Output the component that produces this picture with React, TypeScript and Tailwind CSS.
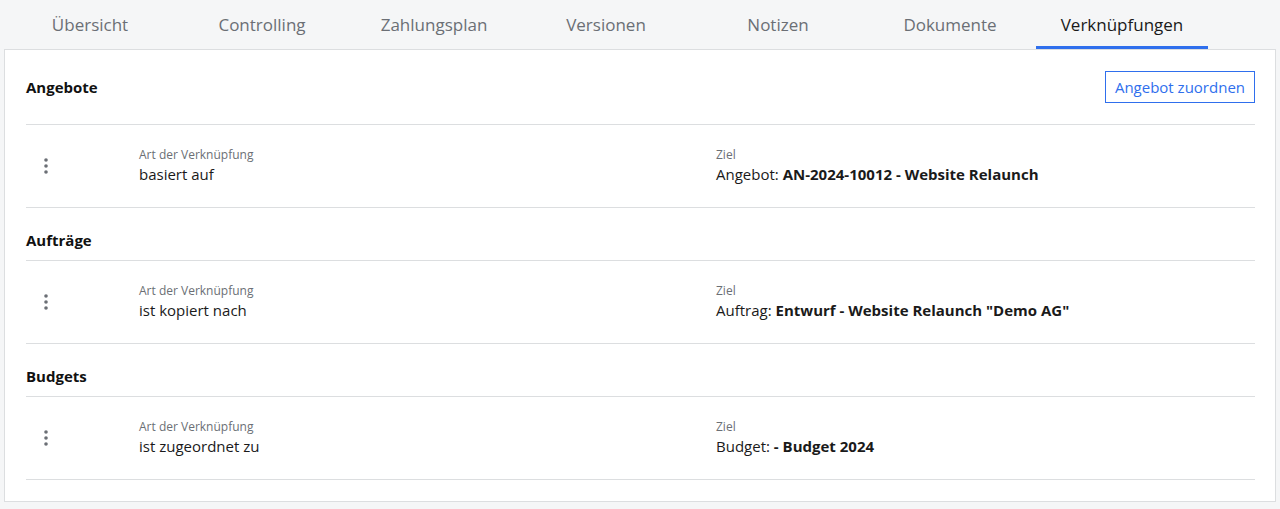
import React from "react";

const tabs = ["Übersicht","Controlling","Zahlungsplan","Versionen","Notizen","Dokumente","Verknüpfungen"];

function Dots() {
  return (
    <svg width="4" height="16" viewBox="0 0 4 16" className="text-gray-500">
      <circle cx="2" cy="2" r="1.8" fill="#6b6f75" />
      <circle cx="2" cy="8" r="1.8" fill="#6b6f75" />
      <circle cx="2" cy="14" r="1.8" fill="#6b6f75" />
    </svg>
  );
}

function Row({ art, prefix, target }: { art: string; prefix: string; target: string }) {
  return (
    <div className="flex items-center h-[83px] border-b border-[#dcdee0]">
      <div className="w-[113px] pl-[18px] flex items-center"><Dots /></div>
      <div className="w-[577px] flex flex-col">
        <span className="text-[12px] leading-[16px] text-[#6b6f75]">Art der Verknüpfung</span>
        <span className="text-[15px] leading-[22px] text-[#1a1a1a]">{art}</span>
      </div>
      <div className="flex flex-col">
        <span className="text-[12px] leading-[16px] text-[#6b6f75]">Ziel</span>
        <span className="text-[15px] leading-[22px] text-[#1a1a1a]">{prefix} <b>{target}</b></span>
      </div>
    </div>
  );
}

export default function App() {
  return (
    <div className="w-[1280px] h-[509px] bg-[#f5f6f7] px-[4px]" style={{ fontFamily: '"Open Sans", sans-serif' }}>
      <div className="flex h-[49px]">
        {tabs.map((t, i) => (
          <div key={t} className={`w-[172px] flex items-center justify-center text-[17px] ${i === 6 ? "text-[#1a1a1a] border-b-[3px] border-[#2f6fed] pt-[3px]" : "text-[#6b6f75]"}`}>
            {t}
          </div>
        ))}
      </div>
      <div className="bg-white border border-[#dcdee0] h-[453px] pl-[21px] pr-[20px]">
        <div className="flex items-center justify-between h-[75px] border-b border-[#dcdee0]">
          <span className="text-[15px] font-bold text-[#111]">Angebote</span>
          <button className="h-[32px] px-[9px] border border-[#2f6fed] text-[#2f6fed] text-[15px]">Angebot zuordnen</button>
        </div>
        <Row art="basiert auf" prefix="Angebot:" target="AN-2024-10012 - Website Relaunch" />
        <div className="flex items-center h-[53px] border-b border-[#dcdee0] pt-[12px]">
          <span className="text-[15px] font-bold text-[#111]">Aufträge</span>
        </div>
        <Row art="ist kopiert nach" prefix="Auftrag:" target={'Entwurf - Website Relaunch "Demo AG"'} />
        <div className="flex items-center h-[53px] border-b border-[#dcdee0] pt-[12px]">
          <span className="text-[15px] font-bold text-[#111]">Budgets</span>
        </div>
        <Row art="ist zugeordnet zu" prefix="Budget:" target="- Budget 2024" />
      </div>
    </div>
  );
}
